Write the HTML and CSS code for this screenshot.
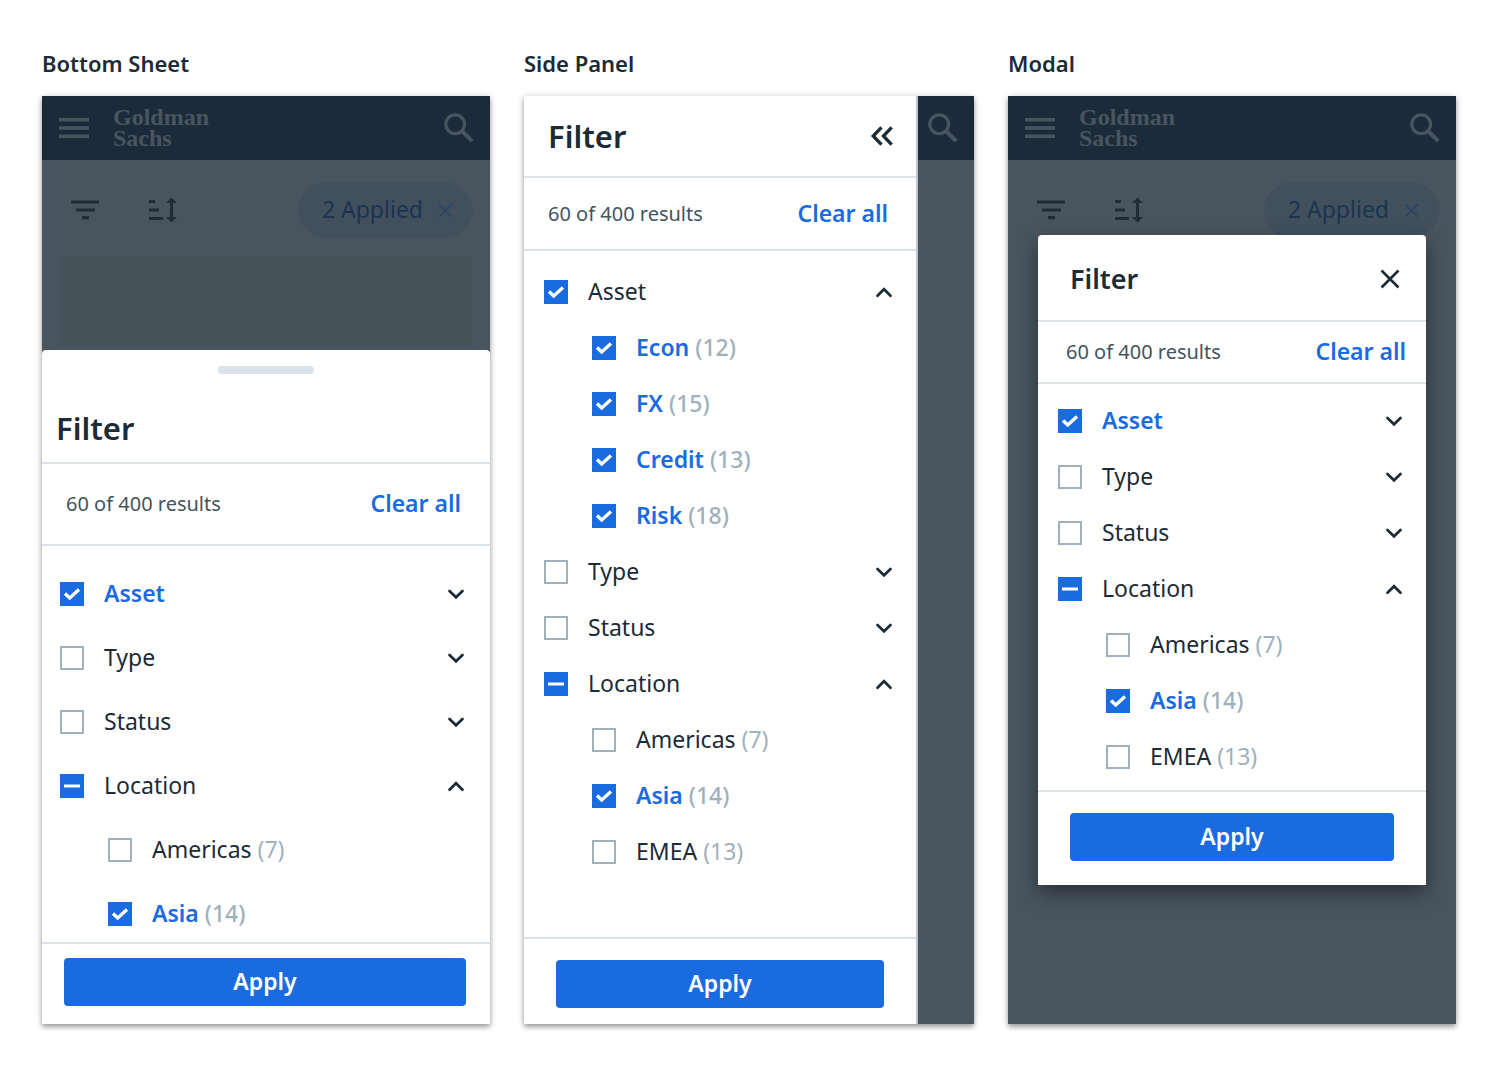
FILE: index.html
```html
<!DOCTYPE html>
<html lang="en">
<head>
<meta charset="utf-8">
<meta name="viewport" content="width=device-width, initial-scale=1">
<title>Filter patterns</title>
<link rel="stylesheet" href="styles.css">
</head>
<body>
<svg class="sprite" aria-hidden="true">
  <symbol id="menu" viewBox="0 0 30 20"><path d="M0 1.7h30M0 10h30M0 18.3h30" stroke="currentColor" stroke-width="3.4"/></symbol>
  <symbol id="search" viewBox="0 0 30 30"><g fill="none" stroke="currentColor"><circle cx="11.2" cy="11.2" r="9.4" stroke-width="3.2"/><path d="M18 18l10.200 10.200" stroke-width="4"/></g></symbol>
  <symbol id="filter" viewBox="0 0 28 20"><path d="M0 2h28M5 10h19M11 17.700h7" stroke="currentColor" stroke-width="3.200"/></symbol>
  <symbol id="sort" viewBox="0 0 28 26"><path d="M0 4.500h6M0 13h10M0 21.500h14" stroke="currentColor" stroke-width="3"/><path d="M22.500 4v18" stroke="currentColor" stroke-width="3"/><path d="M17 6L22.500 0.500L28 6zM17 20L22.500 25.500L28 20z" fill="currentColor"/></symbol>
  <symbol id="close" viewBox="0 0 20 20"><path d="M1.500 1.500l17 17M18.500 1.500l-17 17" stroke="currentColor" stroke-width="2.600"/></symbol>
  <symbol id="double-left" viewBox="0 0 24 24"><path d="M11.500 3.300L3.200 12l8.300 8.700M21.700 3.300L13.400 12l8.300 8.700" fill="none" stroke="currentColor" stroke-width="3.300"/></symbol>
  <symbol id="down" viewBox="0 0 24 24"><path d="M5.500 9L12 15.300L18.500 9" fill="none" stroke="currentColor" stroke-width="2.700" stroke-linecap="round"/></symbol>
  <symbol id="up" viewBox="0 0 24 24"><path d="M5.500 15.700L12 9.200L18.500 15.700" fill="none" stroke="currentColor" stroke-width="2.700" stroke-linecap="round"/></symbol>
</svg>

<main class="gallery">
  <section class="example">
    <h2 class="example-title">Bottom Sheet</h2>
    <div class="phone">
      <div class="screen">
        <header class="app-bar">
          <svg class="menu-icon"><use href="#menu"/></svg>
          <span class="logo">Goldman<br>Sachs</span>
          <svg class="search-icon"><use href="#search"/></svg>
        </header>
        <div class="toolbar">
          <svg class="filter-icon"><use href="#filter"/></svg>
          <svg class="sort-icon"><use href="#sort"/></svg>
          <button class="pill" type="button"><span class="text">2 Applied</span> <svg class="pill-close"><use href="#close"/></svg></button>
        </div>
        <div class="card"></div>
      </div>
      <form class="panel sheet">
        <div class="handle"></div>
        <div class="panel-head"><h3 class="panel-title">Filter</h3></div>
        <div class="summary"><p class="results">60 of 400 results</p><button class="clear text" type="button">Clear all</button></div>
        <ul class="options">
          <li class="row"><label class="option strong"><input class="box" type="checkbox" checked><span class="text">Asset</span></label><button class="toggle" type="button" aria-label="Expand Asset"><svg class="chevron"><use href="#down"/></svg></button></li>
          <li class="row"><label class="option"><input class="box" type="checkbox"><span class="text">Type</span></label><button class="toggle" type="button" aria-label="Expand Type"><svg class="chevron"><use href="#down"/></svg></button></li>
          <li class="row"><label class="option"><input class="box" type="checkbox"><span class="text">Status</span></label><button class="toggle" type="button" aria-label="Expand Status"><svg class="chevron"><use href="#down"/></svg></button></li>
          <li class="row"><label class="option"><input class="box mixed" type="checkbox"><span class="text">Location</span></label><button class="toggle" type="button" aria-label="Collapse Location"><svg class="chevron"><use href="#up"/></svg></button></li>
          <li class="row child"><label class="option"><input class="box" type="checkbox"><span class="text">Americas <span class="count">(7)</span></span></label></li>
          <li class="row child"><label class="option strong"><input class="box" type="checkbox" checked><span class="text">Asia <span class="count">(14)</span></span></label></li>
        </ul>
        <div class="panel-foot"><button class="apply" type="button">Apply</button></div>
      </form>
    </div>
  </section>

  <section class="example">
    <h2 class="example-title">Side Panel</h2>
    <div class="phone">
      <div class="screen">
        <header class="app-bar">
          <svg class="search-icon"><use href="#search"/></svg>
        </header>
      </div>
      <form class="panel side">
        <div class="panel-head"><h3 class="panel-title">Filter</h3><button class="toggle" type="button" aria-label="Collapse panel"><svg class="chevron"><use href="#double-left"/></svg></button></div>
        <div class="summary"><p class="results">60 of 400 results</p><button class="clear text" type="button">Clear all</button></div>
        <ul class="options">
          <li class="row"><label class="option"><input class="box" type="checkbox" checked><span class="text">Asset</span></label><button class="toggle" type="button" aria-label="Collapse Asset"><svg class="chevron"><use href="#up"/></svg></button></li>
          <li class="row child"><label class="option strong"><input class="box" type="checkbox" checked><span class="text">Econ <span class="count">(12)</span></span></label></li>
          <li class="row child"><label class="option strong"><input class="box" type="checkbox" checked><span class="text">FX <span class="count">(15)</span></span></label></li>
          <li class="row child"><label class="option strong"><input class="box" type="checkbox" checked><span class="text">Credit <span class="count">(13)</span></span></label></li>
          <li class="row child"><label class="option strong"><input class="box" type="checkbox" checked><span class="text">Risk <span class="count">(18)</span></span></label></li>
          <li class="row"><label class="option"><input class="box" type="checkbox"><span class="text">Type</span></label><button class="toggle" type="button" aria-label="Expand Type"><svg class="chevron"><use href="#down"/></svg></button></li>
          <li class="row"><label class="option"><input class="box" type="checkbox"><span class="text">Status</span></label><button class="toggle" type="button" aria-label="Expand Status"><svg class="chevron"><use href="#down"/></svg></button></li>
          <li class="row"><label class="option"><input class="box mixed" type="checkbox"><span class="text">Location</span></label><button class="toggle" type="button" aria-label="Collapse Location"><svg class="chevron"><use href="#up"/></svg></button></li>
          <li class="row child"><label class="option"><input class="box" type="checkbox"><span class="text">Americas <span class="count">(7)</span></span></label></li>
          <li class="row child"><label class="option strong"><input class="box" type="checkbox" checked><span class="text">Asia <span class="count">(14)</span></span></label></li>
          <li class="row child"><label class="option"><input class="box" type="checkbox"><span class="text">EMEA <span class="count">(13)</span></span></label></li>
        </ul>
        <div class="panel-foot"><button class="apply" type="button">Apply</button></div>
      </form>
    </div>
  </section>

  <section class="example">
    <h2 class="example-title">Modal</h2>
    <div class="phone">
      <div class="screen">
        <header class="app-bar">
          <svg class="menu-icon"><use href="#menu"/></svg>
          <span class="logo">Goldman<br>Sachs</span>
          <svg class="search-icon"><use href="#search"/></svg>
        </header>
        <div class="toolbar">
          <svg class="filter-icon"><use href="#filter"/></svg>
          <svg class="sort-icon"><use href="#sort"/></svg>
          <button class="pill" type="button"><span class="text">2 Applied</span> <svg class="pill-close"><use href="#close"/></svg></button>
        </div>
      </div>
      <form class="panel modal">
        <div class="panel-head"><h3 class="panel-title">Filter</h3><button class="toggle" type="button" aria-label="Close"><svg class="close-icon"><use href="#close"/></svg></button></div>
        <div class="summary"><p class="results">60 of 400 results</p><button class="clear text" type="button">Clear all</button></div>
        <ul class="options">
          <li class="row"><label class="option strong"><input class="box" type="checkbox" checked><span class="text">Asset</span></label><button class="toggle" type="button" aria-label="Expand Asset"><svg class="chevron"><use href="#down"/></svg></button></li>
          <li class="row"><label class="option"><input class="box" type="checkbox"><span class="text">Type</span></label><button class="toggle" type="button" aria-label="Expand Type"><svg class="chevron"><use href="#down"/></svg></button></li>
          <li class="row"><label class="option"><input class="box" type="checkbox"><span class="text">Status</span></label><button class="toggle" type="button" aria-label="Expand Status"><svg class="chevron"><use href="#down"/></svg></button></li>
          <li class="row"><label class="option"><input class="box mixed" type="checkbox"><span class="text">Location</span></label><button class="toggle" type="button" aria-label="Collapse Location"><svg class="chevron"><use href="#up"/></svg></button></li>
          <li class="row child"><label class="option"><input class="box" type="checkbox"><span class="text">Americas <span class="count">(7)</span></span></label></li>
          <li class="row child"><label class="option strong"><input class="box" type="checkbox" checked><span class="text">Asia <span class="count">(14)</span></span></label></li>
          <li class="row child"><label class="option"><input class="box" type="checkbox"><span class="text">EMEA <span class="count">(13)</span></span></label></li>
        </ul>
        <div class="panel-foot"><button class="apply" type="button">Apply</button></div>
      </form>
    </div>
  </section>
</main>
<script src="script.js"></script>
</body>
</html>
```
FILE: styles.css
```css
* { box-sizing: border-box; }

body {
  margin: 0;
  background: #fff;
  color: #1c2b36;
  font: 400 23px/32px "Noto Sans", sans-serif;
}

h2, h3, p, ul { margin: 0; padding: 0; }
ul { list-style: none; }
svg { display: block; flex: none; }
button { margin: 0; padding: 0; border: 0; background: none; color: inherit; font: inherit; cursor: pointer; }
.sprite { position: absolute; width: 0; height: 0; }

.gallery {
  display: grid;
  grid-template-columns: 448fr 450fr 448fr;
  gap: 34px;
  padding: 47px 42px 68px;
}
.example { display: flex; flex-direction: column; gap: 17px; min-width: 0; }
.example-title { font-size: 22px; line-height: 32px; font-weight: 600; }

/* Screen and panel share one grid cell, the panel painted on top. */
.phone {
  flex: 1;
  display: grid;
  grid-template-columns: minmax(0, 1fr);
  box-shadow: 0 3px 5px rgba(0, 0, 0, .35), 0 0 8px rgba(0, 0, 0, .12);
}
.screen, .panel { grid-area: 1 / 1; }
.screen { background: #49555e; color: #49555e; }

.app-bar {
  display: flex;
  align-items: center;
  height: 64px;
  padding: 0 16px 0 17px;
  background: #1c2b3a;
}
.menu-icon { width: 30px; height: 20px; margin-right: 24px; }
.logo { font: 700 24px/21px "Liberation Serif", serif; }
.search-icon { width: 30px; height: 30px; margin-left: auto; }

.toolbar {
  display: flex;
  align-items: center;
  height: 96px;
  padding: 4px 17px 0 29px;
  color: #1f2d38;
}
.filter-icon { width: 28px; height: 20px; margin-right: 50px; }
.sort-icon { width: 28px; height: 26px; }
.pill {
  display: flex;
  align-items: center;
  gap: 15px;
  height: 56px;
  margin-left: auto;
  padding: 0 20px 0 24px;
  border-radius: 28px;
  background: #42505d;
  color: #1b3450;
}
.pill-close { width: 15px; height: 15px; color: #2b4665; }
.card { height: 90px; margin: 0 17px; background: #47535b; }

.panel { display: flex; flex-direction: column; background: #fff; }
.panel-head, .summary {
  display: flex;
  align-items: center;
  justify-content: space-between;
  border-bottom: 2px solid #dce3e8;
}
.panel-title { font-size: 31px; line-height: 40px; font-weight: 600; }
.results { font-size: 20px; color: #44545f; }
.clear { font-weight: 600; color: #1b6be0; }
.toggle { display: flex; }
.chevron { width: 24px; height: 24px; }
.close-icon { width: 20px; height: 20px; }

.options { flex: 1; }
.row { display: flex; align-items: center; justify-content: space-between; height: 56px; }
.child { padding-left: 48px; }
.option { display: flex; align-items: center; gap: 20px; cursor: pointer; }
.text { padding-bottom: 2px; }
.strong { font-weight: 600; color: #1b6be0; }
.count { color: #9fb1bd; }
.strong .count { font-weight: 500; }

.box {
  appearance: none;
  width: 24px;
  height: 24px;
  margin: 0;
  border: 2px solid #9fb1bd;
  background: #fff center / 24px 24px no-repeat;
}
.box:checked, .box:indeterminate { border: 0; background-color: #1b6be0; }
.box:checked { background-image: url("data:image/svg+xml,%3Csvg xmlns='http://www.w3.org/2000/svg' viewBox='0 0 24 24'%3E%3Cpath d='M5 11.500L9.700 16L19 7.500' fill='none' stroke='white' stroke-width='3.300'/%3E%3C/svg%3E"); }
.box:indeterminate { background-image: url("data:image/svg+xml,%3Csvg xmlns='http://www.w3.org/2000/svg' viewBox='0 0 24 24'%3E%3Cpath d='M4 12h16' stroke='white' stroke-width='3'/%3E%3C/svg%3E"); }

.apply {
  width: 100%;
  height: 48px;
  padding-bottom: 2px;
  border-radius: 4px;
  background: #1b6be0;
  color: #fff;
  font-weight: 600;
}
.panel-foot { border-top: 2px solid #dce3e8; background: #fff; }

.sheet { margin-top: 254px; border-radius: 4px 4px 0 0; }
.handle { width: 96px; height: 8px; margin: 16px auto 0; border-radius: 4px; background: #dce3e8; }
.sheet .panel-head { padding: 34px 14px 14px; }
.sheet .summary { height: 82px; padding: 0 29px 0 24px; }
.sheet .options { padding: 16px 22px 0 18px; margin-bottom: -4px; }
.sheet .row { height: 64px; }
.sheet .panel-foot { z-index: 1; padding: 14px 24px 18px 22px; }

.side { margin-right: 56px; border-right: 2px solid #b8c7d4; }
.side .panel-head { height: 82px; padding: 0 22px 0 24px; }
.side .summary { height: 73px; padding: 0 28px 0 24px; }
.side .options { padding: 13px 20px 57px; }
.side .panel-foot { padding: 21px 32px 16px; }

.modal {
  align-self: start;
  margin: 139px 30px 0;
  border-radius: 4px;
  box-shadow: 0 8px 20px rgba(20, 25, 35, .6);
}
.modal .panel-head { height: 87px; padding: 2px 26px 0 32px; }
.modal .panel-title { font-size: 27px; }
.modal .summary { height: 62px; padding: 0 20px 0 28px; }
.modal .options { padding: 9px 20px 5px; }
.modal .panel-foot { padding: 21px 32px 24px; }
```
FILE: script.js
```js
document.querySelectorAll('.mixed').forEach(function (box) {
  box.indeterminate = true;
});
```
